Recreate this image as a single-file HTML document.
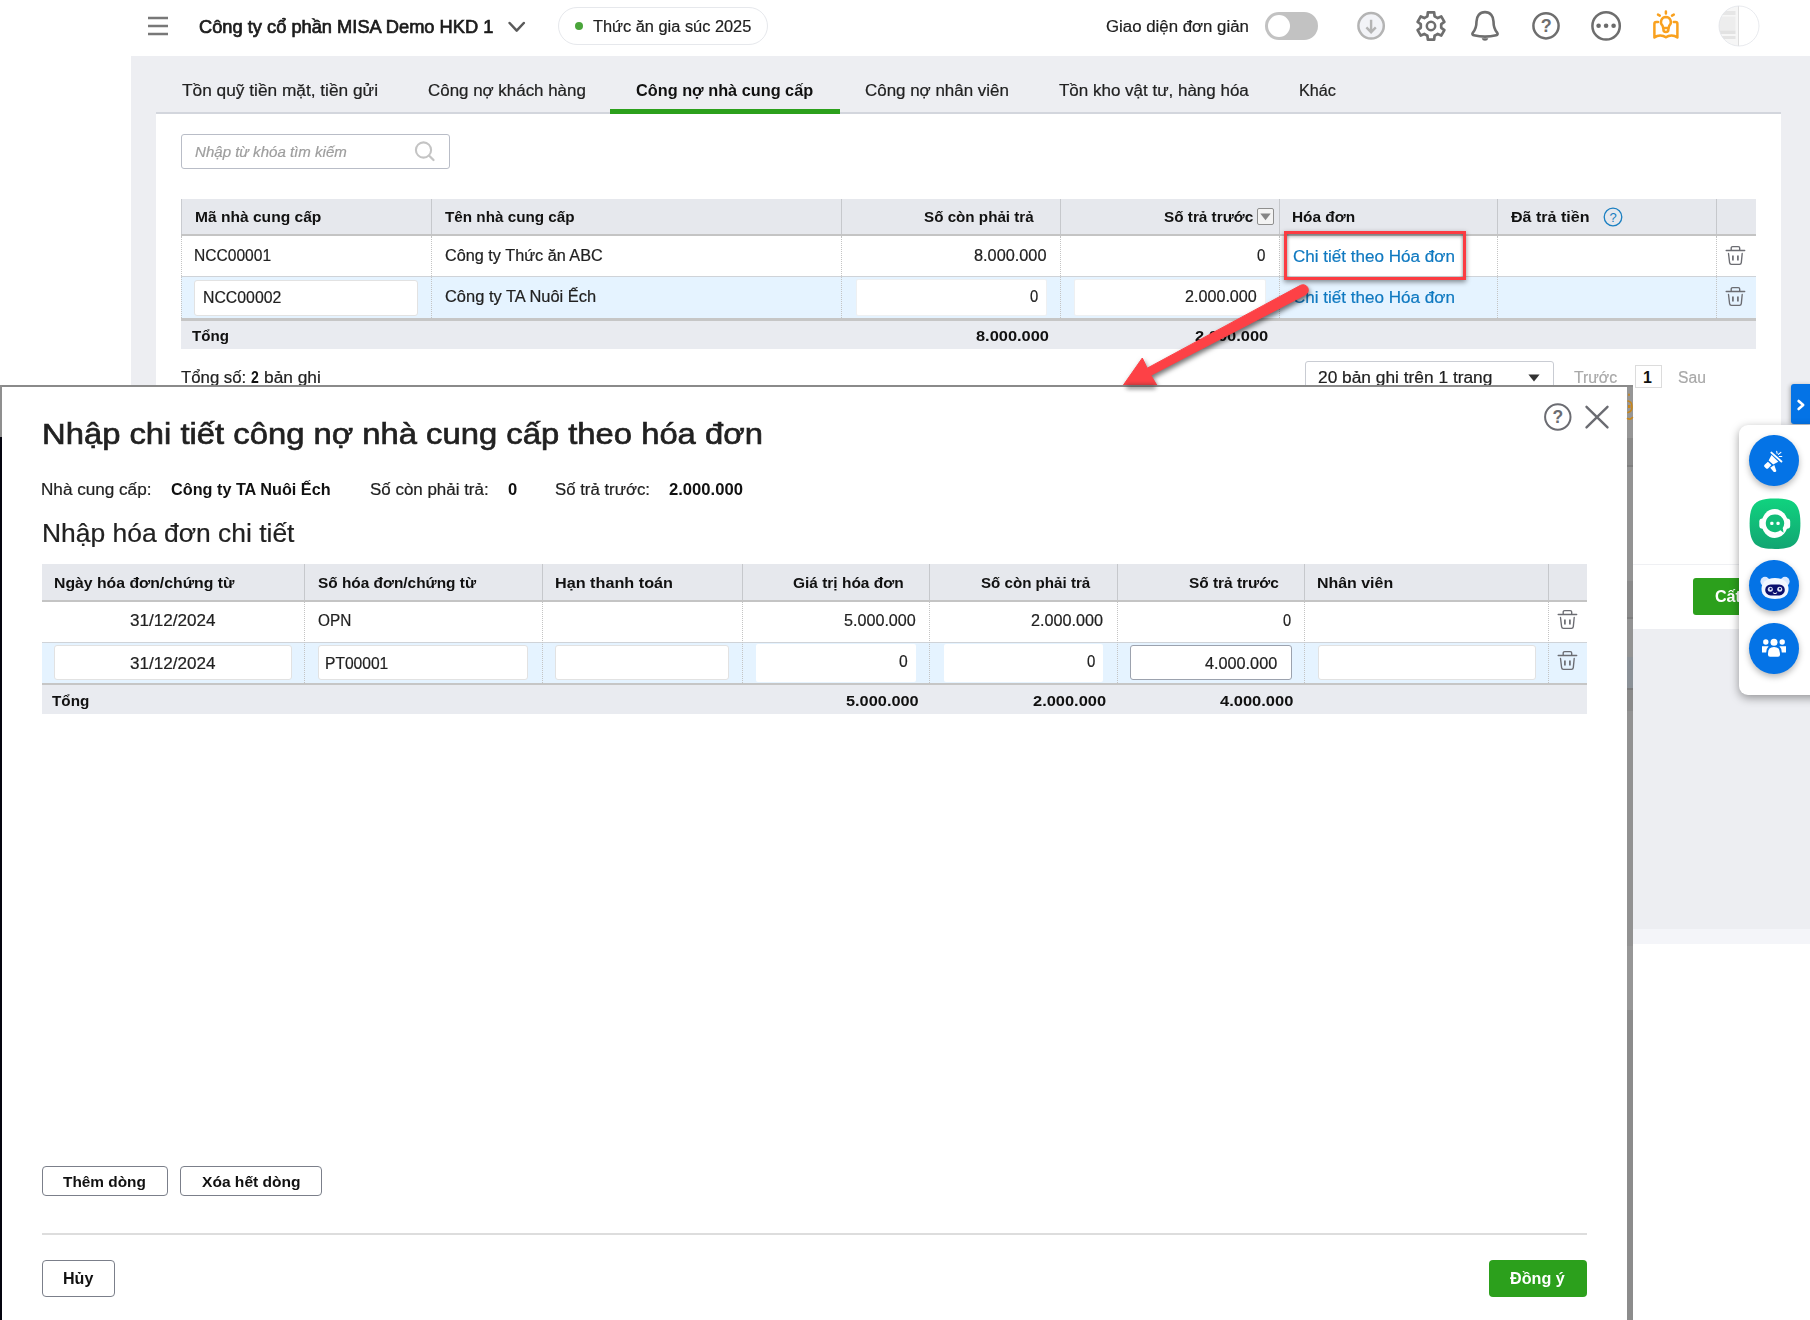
<!DOCTYPE html>
<html lang="vi">
<head>
<meta charset="utf-8">
<title>Nhập chi tiết công nợ nhà cung cấp theo hóa đơn</title>
<style>
html,body{margin:0;padding:0}
body{width:1810px;height:1320px;position:relative;overflow:hidden;background:#fff;font-family:"Liberation Sans",sans-serif;color:#212121}
.t{position:absolute;white-space:pre;line-height:1;margin:0;transform-origin:0 0}
.a{position:absolute;box-sizing:border-box}
.vs{position:absolute;width:1px;background:#c6c8cc}
.vd{position:absolute;width:0;border-left:1px dotted #c4c4c4}
.inp{position:absolute;box-sizing:border-box;background:#fff;border:1px solid #e2e2e2;border-radius:3px}
.num{position:absolute;box-sizing:border-box;background:#fff;border-radius:2px}
svg{position:absolute;overflow:visible}
#page,#modal,#float{position:absolute;left:0;top:0;width:1810px;height:1320px}
</style>
</head>
<body>
<div id="page">
<!-- backgrounds -->
<div class="a" style="left:131px;top:56px;width:1679px;height:873px;background:#edeef2"></div>
<div class="a" style="left:131px;top:929px;width:1679px;height:15px;background:#f4f5f9"></div>
<div class="a" style="left:156px;top:112px;width:1625px;height:2px;background:#d3d6dd"></div>
<div class="a" style="left:156px;top:114px;width:1625px;height:515px;background:#fff"></div>
<div class="a" style="left:610px;top:109px;width:230px;height:5px;background:#2ca01c"></div>
<div class="a" style="left:156px;top:564px;width:1625px;height:1px;background:#eff0f3"></div>
<svg style="left:147px;top:16px" width="22" height="20" viewBox="0 0 22 20"><path d="M1 2 H21 M1 10 H21 M1 18 H21" stroke="#787878" stroke-width="2.6"/></svg>
<svg style="left:508px;top:21px" width="18" height="12" viewBox="0 0 18 12"><path d="M1.6 2 L8.7 9.6 L15.8 2" fill="none" stroke="#5a5a5a" stroke-width="2.5" stroke-linecap="round" stroke-linejoin="round"/></svg>
<div class="a" style="left:558px;top:7px;width:210px;height:38px;border:1px solid #e6e8ec;border-radius:19px;background:#fff"></div>
<div class="a" style="left:575px;top:22px;width:8px;height:8px;border-radius:50%;background:#4aa53a"></div>
<div class="a" style="left:1265px;top:12px;width:53px;height:28px;border-radius:14px;background:#c2c2c2"></div>
<div class="a" style="left:1267.8px;top:14.8px;width:22.4px;height:22.4px;border-radius:50%;background:#fff"></div>
<svg style="left:1356px;top:11px" width="30" height="30" viewBox="0 0 30 30"><circle cx="15.1" cy="14.8" r="12.7" fill="#f2f3f7" stroke="#b4b4b4" stroke-width="2.5"/><path d="M15.1 8.8 V21 M10.4 16.4 L15.1 21.2 L19.8 16.4" fill="none" stroke="#b4b4b4" stroke-width="2.4" stroke-linecap="butt" stroke-linejoin="miter"/></svg>
<svg style="left:1416px;top:10px" width="30" height="32" viewBox="0 0 30 32"><path d="M11.44 6.23 L11.85 2.36 L18.15 2.36 L18.56 6.23 L20.10 7.17 L21.68 8.03 L25.24 6.45 L28.39 11.91 L25.24 14.19 L25.20 16.00 L25.24 17.81 L28.39 20.09 L25.24 25.55 L21.68 23.97 L20.10 24.83 L18.56 25.77 L18.15 29.64 L11.85 29.64 L11.44 25.77 L9.90 24.83 L8.32 23.97 L4.76 25.55 L1.61 20.09 L4.76 17.81 L4.80 16.00 L4.76 14.19 L1.61 11.91 L4.76 6.45 L8.32 8.03 L9.90 7.17 Z" fill="none" stroke="#6e6e6e" stroke-width="2.7" stroke-linejoin="round"/><circle cx="15" cy="16" r="4.2" fill="none" stroke="#6e6e6e" stroke-width="2.5"/></svg>
<svg style="left:1470.8px;top:10px" width="28" height="32" viewBox="0 0 28 32"><path d="M14 2.1 C8.6 2.1 5.5 6.2 5.5 11.5 C5.5 16.5 5 19 1.9 22.6 C0.9 23.8 1.4 25 2.8 25.3 C9.4 26.9 18.6 26.9 25.2 25.3 C26.6 25 27.1 23.8 26.1 22.6 C23 19 22.5 16.5 22.5 11.5 C22.5 6.2 19.4 2.1 14 2.1 Z" fill="none" stroke="#6e6e6e" stroke-width="2.6" stroke-linejoin="round"/><path d="M10.6 28.3 H17.4 Q16.6 30.8 14 30.8 Q11.4 30.8 10.6 28.3 Z" fill="#6b6b6b"/></svg>
<svg style="left:1531px;top:11px" width="30" height="30" viewBox="0 0 30 30"><circle cx="15" cy="14.8" r="12.6" fill="none" stroke="#6e6e6e" stroke-width="2.5"/><text x="15.2" y="21.4" text-anchor="middle" font-family="Liberation Sans, sans-serif" font-size="18" font-weight="700" fill="#6e6e6e">?</text></svg>
<svg style="left:1590px;top:10px" width="32" height="32" viewBox="0 0 32 32"><circle cx="16.1" cy="15.9" r="13.7" fill="none" stroke="#6e6e6e" stroke-width="2.5"/><circle cx="8.6" cy="15.8" r="2.3" fill="#6b6b6b"/><circle cx="16.1" cy="15.8" r="2.3" fill="#6b6b6b"/><circle cx="23.6" cy="15.8" r="2.3" fill="#6b6b6b"/></svg>
<svg style="left:1652px;top:10px" width="28" height="30" viewBox="0 0 28 30" fill="none" stroke="#f9a11e" stroke-width="2.5" stroke-linecap="round" stroke-linejoin="round"><path d="M13.9 1.6 V3.6 M6 4.6 L7.8 5.6 M21.8 4.6 L20 5.6"/><path d="M13.9 7 A5 5 0 0 1 17.3 15.6 L16.6 18 H11.2 L10.5 15.6 A5 5 0 0 1 13.9 7 Z"/><path d="M11.4 18 V19.4 A2.5 2.5 0 0 0 16.4 19.4 V18"/><path d="M6 12 H4.2 Q2.4 12 2.4 13.8 V27.4 Q5 25.4 8.2 25.4 Q11.6 25.4 13.9 27.3 Q16.2 25.4 19.6 25.4 Q22.8 25.4 25.4 27.4 V13.8 Q25.4 12 23.6 12 H21.8"/></svg>
<svg style="left:1718px;top:5px" width="42" height="42" viewBox="0 0 42 42"><defs><clipPath id="av"><circle cx="21" cy="21" r="20"/></clipPath></defs><g clip-path="url(#av)"><rect x="0" y="0" width="42" height="42" fill="#fff"/><rect x="0" y="0" width="20.5" height="42" fill="#f6f6f6"/><rect x="0" y="6" width="17.5" height="4" fill="#e6e6e6"/><rect x="0" y="11.5" width="17.5" height="14" fill="#ededed"/><rect x="0" y="25.5" width="17.5" height="3.5" fill="#e2e2e2"/><rect x="0" y="31" width="17.5" height="3" fill="#e4e4e4"/><rect x="20" y="0" width="1" height="42" fill="#dedede"/></g><circle cx="21" cy="21" r="20" fill="none" stroke="#e2e5ea" stroke-width="0.8"/></svg>
<!-- search -->
<div class="a" style="left:181px;top:134px;width:269px;height:35px;border:1px solid #b9bdc7;border-radius:3px;background:#fff"></div>
<svg style="left:412px;top:139px" width="26" height="26" viewBox="0 0 26 26"><circle cx="11.5" cy="11" r="7.6" fill="none" stroke="#c4c4c4" stroke-width="2.1"/><path d="M17.2 16.8 L21.5 21" stroke="#c4c4c4" stroke-width="2.3" stroke-linecap="round"/></svg>
<div class="a" style="left:181px;top:199px;width:1575px;height:35px;background:#e6e8ed"></div>
<div class="a" style="left:181px;top:234px;width:1575px;height:2px;background:#c4c4c4"></div>
<div class="a" style="left:181px;top:276px;width:1575px;height:1px;background:#cfd3d8"></div>
<div class="a" style="left:181px;top:277px;width:1575px;height:41px;background:#e5f3ff"></div>
<div class="a" style="left:181px;top:318px;width:1575px;height:3px;background:#c6c6c6"></div>
<div class="a" style="left:181px;top:321px;width:1575px;height:28px;background:#e9ebf0"></div>
<div class="vs" style="left:431px;top:199px;height:35px"></div>
<div class="vd" style="left:431px;top:236px;height:82px"></div>
<div class="vs" style="left:841px;top:199px;height:35px"></div>
<div class="vd" style="left:841px;top:236px;height:82px"></div>
<div class="vs" style="left:1060px;top:199px;height:35px"></div>
<div class="vd" style="left:1060px;top:236px;height:82px"></div>
<div class="vs" style="left:1279px;top:199px;height:35px"></div>
<div class="vd" style="left:1279px;top:236px;height:82px"></div>
<div class="vs" style="left:1497px;top:199px;height:35px"></div>
<div class="vd" style="left:1497px;top:236px;height:82px"></div>
<div class="vs" style="left:1716px;top:199px;height:35px"></div>
<div class="vd" style="left:1716px;top:236px;height:82px"></div>
<div class="vd" style="left:181px;top:236px;height:82px"></div>
<div class="vs" id="hleft" style="left:181px;top:199px;height:35px;background:#c9cbd0"></div>
<div class="inp" style="left:194px;top:280px;width:224px;height:35.5px"></div>
<div class="num" style="left:855.5px;top:279px;width:191px;height:37px;border:1px solid #eef0f2"></div>
<div class="num" style="left:1073.5px;top:279px;width:192px;height:37px;border:1px solid #eef0f2"></div>
<div class="a" style="left:1256.5px;top:207.5px;width:17.5px;height:17.5px;border:1.2px solid #8f8f8f;border-radius:2px;background:#f3f3f3"></div>
<svg style="left:1260px;top:212.5px" width="11" height="8" viewBox="0 0 11 8"><path d="M0.3 0.5 H10.7 L5.5 7.3 Z" fill="#858585"/></svg>
<svg style="left:1602.7px;top:207px" width="20" height="20" viewBox="0 0 20 20"><circle cx="10" cy="10" r="8.8" fill="none" stroke="#1a7fc1" stroke-width="1.3"/><text x="10" y="14.6" text-anchor="middle" font-family="Liberation Sans, sans-serif" font-size="13" fill="#1a7fc1">?</text></svg>
<svg style="left:1726px;top:245.5px" width="19" height="19" viewBox="0 0 19 19" fill="none" stroke="#6b6c72" stroke-width="1.35" stroke-linecap="round" stroke-linejoin="round"><path d="M0.2 4.5 H18.7"/><path d="M5.2 4.3 V2.1 Q5.2 0.6 6.7 0.6 H12.2 Q13.7 0.6 13.7 2.1 V4.3"/><path d="M2.5 7.5 L3.6 16.6 Q3.8 18.3 5.4 18.3 H13.5 Q15.1 18.3 15.3 16.6 L16.2 7.5"/><path d="M6.9 9.5 V14.5 M11.9 9.5 V14.5" stroke-width="1.7" stroke-linecap="butt"/></svg>
<svg style="left:1726px;top:286.5px" width="19" height="19" viewBox="0 0 19 19" fill="none" stroke="#6b6c72" stroke-width="1.35" stroke-linecap="round" stroke-linejoin="round"><path d="M0.2 4.5 H18.7"/><path d="M5.2 4.3 V2.1 Q5.2 0.6 6.7 0.6 H12.2 Q13.7 0.6 13.7 2.1 V4.3"/><path d="M2.5 7.5 L3.6 16.6 Q3.8 18.3 5.4 18.3 H13.5 Q15.1 18.3 15.3 16.6 L16.2 7.5"/><path d="M6.9 9.5 V14.5 M11.9 9.5 V14.5" stroke-width="1.7" stroke-linecap="butt"/></svg>
<div class="a" style="left:1284px;top:231px;width:182px;height:49px;border:3px solid #fb3c42;box-shadow:0 2px 5px rgba(0,0,0,.45), inset 0 3px 4px -1px rgba(0,0,0,.38), inset 2px 0 3px -1px rgba(0,0,0,.18), inset -2px 0 3px -1px rgba(0,0,0,.18)"></div>
<div class="a" style="left:1304.5px;top:360.6px;width:249px;height:36px;border:1px solid #c9ccd3;border-radius:3px;background:#fff"></div>
<svg style="left:1528px;top:373.5px" width="12" height="8" viewBox="0 0 12 8"><path d="M0.4 0.6 H11.6 L6 7.6 Z" fill="#333"/></svg>
<div class="a" style="left:1634.6px;top:365.3px;width:27.2px;height:23.2px;border:1px solid #dcdcdc;background:#fff"></div>
<div class="a" style="left:1693px;top:578px;width:110px;height:37px;background:#2ca01c;border-radius:3px"></div>
<span class="t" style="left:199.3px;top:18px;font-size:18px;color:#1b1b1b;transform:scaleX(1.0147);-webkit-text-stroke:0.7px #1b1b1b;">Công ty cổ phần MISA Demo HKD 1</span>
<span class="t" style="left:593.3px;top:19px;font-size:16px;color:#212121;transform:scaleX(1.0226);-webkit-text-stroke:0.2px #212121;">Thức ăn gia súc 2025</span>
<span class="t" style="left:1105.8px;top:19px;font-size:16px;color:#212121;transform:scaleX(1.0509);-webkit-text-stroke:0.2px #212121;">Giao diện đơn giản</span>
<span class="t" style="left:181.8px;top:83px;font-size:16px;color:#212121;transform:scaleX(1.0801);-webkit-text-stroke:0.2px #212121;">Tồn quỹ tiền mặt, tiền gửi</span>
<span class="t" style="left:427.8px;top:83px;font-size:16px;color:#212121;transform:scaleX(1.0575);-webkit-text-stroke:0.2px #212121;">Công nợ khách hàng</span>
<span class="t" style="left:636.3px;top:83px;font-size:16px;color:#111;transform:scaleX(1.0180);font-weight:700;">Công nợ nhà cung cấp</span>
<span class="t" style="left:865.3px;top:83px;font-size:16px;color:#212121;transform:scaleX(1.0583);-webkit-text-stroke:0.2px #212121;">Công nợ nhân viên</span>
<span class="t" style="left:1058.8px;top:83px;font-size:16px;color:#212121;transform:scaleX(1.0613);-webkit-text-stroke:0.2px #212121;">Tồn kho vật tư, hàng hóa</span>
<span class="t" style="left:1299.3px;top:83px;font-size:16px;color:#212121;transform:scaleX(1.0122);-webkit-text-stroke:0.2px #212121;">Khác</span>
<span class="t" style="left:195.0px;top:145px;font-size:14px;color:#9e9e9e;transform:scaleX(1.0757);-webkit-text-stroke:0.2px #9e9e9e;font-style:italic;">Nhập từ khóa tìm kiếm</span>
<span class="t" style="left:194.6px;top:209px;font-size:15px;color:#111;transform:scaleX(1.0380);font-weight:700;">Mã nhà cung cấp</span>
<span class="t" style="left:444.8px;top:209px;font-size:15px;color:#111;transform:scaleX(1.0161);font-weight:700;">Tên nhà cung cấp</span>
<span class="t" style="left:923.8px;top:209px;font-size:15px;color:#111;transform:scaleX(1.0128);font-weight:700;">Số còn phải trả</span>
<span class="t" style="left:1163.9px;top:209px;font-size:15px;color:#111;transform:scaleX(1.0203);font-weight:700;">Số trả trước</span>
<span class="t" style="left:1291.8px;top:209px;font-size:15px;color:#111;transform:scaleX(1.0260);font-weight:700;">Hóa đơn</span>
<span class="t" style="left:1511.3px;top:209px;font-size:15px;color:#111;transform:scaleX(1.0712);font-weight:700;">Đã trả tiền</span>
<span class="t" style="left:194.3px;top:248px;font-size:16px;color:#212121;transform:scaleX(0.9737);-webkit-text-stroke:0.2px #212121;">NCC00001</span>
<span class="t" style="left:444.8px;top:248px;font-size:16px;color:#212121;transform:scaleX(1.0154);-webkit-text-stroke:0.2px #212121;">Công ty Thức ăn ABC</span>
<span class="t" style="left:973.9px;top:248px;font-size:16px;color:#212121;transform:scaleX(1.0185);-webkit-text-stroke:0.2px #212121;">8.000.000</span>
<span class="t" style="left:1257.0px;top:248px;font-size:16px;color:#212121;transform:scaleX(0.9444);-webkit-text-stroke:0.2px #212121;">0</span>
<span class="t" style="left:1292.8px;top:249px;font-size:16px;color:#0f79c0;transform:scaleX(1.0655);-webkit-text-stroke:0.2px #0f79c0;">Chi tiết theo Hóa đơn</span>
<span class="t" style="left:202.7px;top:290px;font-size:16px;color:#212121;transform:scaleX(0.9890);-webkit-text-stroke:0.2px #212121;">NCC00002</span>
<span class="t" style="left:444.8px;top:289px;font-size:16px;color:#212121;transform:scaleX(1.0277);-webkit-text-stroke:0.2px #212121;">Công ty TA Nuôi Ếch</span>
<span class="t" style="left:1029.5px;top:289px;font-size:16px;color:#212121;transform:scaleX(0.9222);-webkit-text-stroke:0.2px #212121;">0</span>
<span class="t" style="left:1184.8px;top:289px;font-size:16px;color:#212121;transform:scaleX(1.0087);-webkit-text-stroke:0.2px #212121;">2.000.000</span>
<span class="t" style="left:1292.8px;top:290px;font-size:16px;color:#0f79c0;transform:scaleX(1.0655);-webkit-text-stroke:0.2px #0f79c0;">Chi tiết theo Hóa đơn</span>
<span class="t" style="left:192.2px;top:328px;font-size:15px;color:#111;transform:scaleX(1.0086);font-weight:700;">Tổng</span>
<span class="t" style="left:976.1px;top:328px;font-size:15px;color:#111;transform:scaleX(1.0936);font-weight:700;">8.000.000</span>
<span class="t" style="left:1194.8px;top:328px;font-size:15px;color:#111;transform:scaleX(1.0981);font-weight:700;">2.000.000</span>
<span class="t" style="left:181.3px;top:370px;font-size:16px;color:#212121;transform:scaleX(1.0475);-webkit-text-stroke:0.2px #212121;">Tổng số:</span>
<span class="t" style="left:250.9px;top:370px;font-size:16px;color:#111;transform:scaleX(0.8778);font-weight:700;">2</span>
<span class="t" style="left:263.9px;top:370px;font-size:16px;color:#212121;transform:scaleX(1.0817);-webkit-text-stroke:0.2px #212121;">bản ghi</span>
<span class="t" style="left:1318.3px;top:370px;font-size:16px;color:#212121;transform:scaleX(1.0830);-webkit-text-stroke:0.2px #212121;">20 bản ghi trên 1 trang</span>
<span class="t" style="left:1574.3px;top:370px;font-size:16px;color:#a8a8a8;transform:scaleX(0.9860);-webkit-text-stroke:0.2px #a8a8a8;">Trước</span>
<span class="t" style="left:1643.0px;top:370px;font-size:16px;color:#111;transform:scaleX(1.0000);font-weight:700;">1</span>
<span class="t" style="left:1678.3px;top:370px;font-size:16px;color:#a8a8a8;transform:scaleX(0.9793);-webkit-text-stroke:0.2px #a8a8a8;">Sau</span>
<span class="t" style="left:1714.6px;top:589px;font-size:16px;color:#fff;transform:scaleX(1.0056);font-weight:700;">Cất</span>
</div>
<svg style="left:0;top:0;filter:drop-shadow(1px 3px 2.5px rgba(0,0,0,.55))" width="1810" height="420" viewBox="0 0 1810 420"><path d="M1305.5 294.7 L1150.9 375.3 L1156.7 385.0 L1123.0 385.6 L1142.3 358.0 L1147.2 368.2 L1300.5 285.3 A5.3 5.3 0 0 1 1305.5 294.7 Z" fill="#fd4146" stroke="#fd4146" stroke-width="1" stroke-linejoin="round"/></svg>
<div id="modal">
<div class="a" style="left:2px;top:387px;width:1625px;height:933px;background:#fff"></div>
<div class="a" style="left:0;top:385px;width:1633px;height:2.2px;background:#8a8a8a"></div>
<div class="a" style="left:0;top:385px;width:2px;height:52px;background:#8f8f8f"></div>
<div class="a" style="left:0;top:437px;width:2px;height:883px;background:#04040f"></div>
<div class="a" style="left:1627px;top:387px;width:6px;height:51px;background:#969696"></div>
<div class="a" style="left:1627px;top:438px;width:6px;height:27px;background:#8a8a8a"></div>
<div class="a" style="left:1627px;top:465px;width:6px;height:2px;background:#7f7f7f"></div>
<div class="a" style="left:1627px;top:467px;width:6px;height:114px;background:#939393"></div>
<div class="a" style="left:1627px;top:581px;width:6px;height:36px;background:#8a8a8a"></div>
<div class="a" style="left:1627px;top:617px;width:6px;height:2px;background:#7e7e7e"></div>
<div class="a" style="left:1627px;top:619px;width:6px;height:38px;background:#939393"></div>
<div class="a" style="left:1627px;top:657px;width:6px;height:31px;background:#8b9197"></div>
<div class="a" style="left:1627px;top:688px;width:6px;height:2px;background:#7c7c7c"></div>
<div class="a" style="left:1627px;top:690px;width:6px;height:21px;background:#8a8a8a"></div>
<div class="a" style="left:1627px;top:711px;width:6px;height:235px;background:#929292"></div>
<div class="a" style="left:1627px;top:946px;width:6px;height:64px;background:#979797"></div>
<div class="a" style="left:1627px;top:1010px;width:6px;height:310px;background:#8c8c8c"></div>
<svg style="left:1627px;top:392px" width="6" height="30" viewBox="0 0 6 30"><g fill="none" stroke="#c8861c" stroke-width="1.6" stroke-linecap="round"><path d="M2 2.200 V3.200"/><path d="M1 9 Q5 9.500 5 15 Q5 19.500 1 20.500"/><path d="M0.500 26.500 Q3.500 28 5.500 25.500"/></g><rect x="1" y="13" width="2.500" height="3" fill="#c8861c"/></svg>

<svg style="left:1543px;top:402px" width="30" height="30" viewBox="0 0 30 30"><circle cx="14.8" cy="15" r="12.7" fill="none" stroke="#6b6c72" stroke-width="2"/><text x="14.8" y="21.2" text-anchor="middle" font-family="Liberation Sans, sans-serif" font-size="17.5" font-weight="700" fill="#6b6c72">?</text></svg>
<svg style="left:1585px;top:405px" width="24" height="24" viewBox="0 0 24 24"><path d="M1.5 1.8 L22.5 22.4 M22.5 1.8 L1.5 22.4" stroke="#6b6c72" stroke-width="2.4" stroke-linecap="round"/></svg>
<div class="a" style="left:42px;top:564px;width:1545px;height:36px;background:#e6e8ed"></div>
<div class="a" style="left:42px;top:600px;width:1545px;height:2px;background:#c4c4c4"></div>
<div class="a" style="left:42px;top:642px;width:1545px;height:1px;background:#cfd3d8"></div>
<div class="a" style="left:42px;top:643px;width:1545px;height:40px;background:#e5f3ff"></div>
<div class="a" style="left:42px;top:683px;width:1545px;height:2.8px;background:#c6c6c6"></div>
<div class="a" style="left:42px;top:685px;width:1545px;height:28.8px;background:#e9ebf0"></div>
<div class="vs" style="left:304px;top:564px;height:36px"></div>
<div class="vd" style="left:304px;top:602px;height:81px"></div>
<div class="vs" style="left:542px;top:564px;height:36px"></div>
<div class="vd" style="left:542px;top:602px;height:81px"></div>
<div class="vs" style="left:742px;top:564px;height:36px"></div>
<div class="vd" style="left:742px;top:602px;height:81px"></div>
<div class="vs" style="left:929px;top:564px;height:36px"></div>
<div class="vd" style="left:929px;top:602px;height:81px"></div>
<div class="vs" style="left:1117px;top:564px;height:36px"></div>
<div class="vd" style="left:1117px;top:602px;height:81px"></div>
<div class="vs" style="left:1304px;top:564px;height:36px"></div>
<div class="vd" style="left:1304px;top:602px;height:81px"></div>
<div class="vs" style="left:1548px;top:564px;height:36px"></div>
<div class="vd" style="left:1548px;top:602px;height:81px"></div>
<div class="inp" style="left:54.3px;top:645.2px;width:237.6px;height:35.3px"></div>
<div class="inp" style="left:318.4px;top:645.2px;width:210px;height:35.3px"></div>
<div class="inp" style="left:555.3px;top:645.4px;width:173.5px;height:34.2px"></div>
<div class="num" style="left:755.5px;top:643.6px;width:160.7px;height:38.6px"></div>
<div class="num" style="left:943.8px;top:643.6px;width:159.6px;height:38.6px"></div>
<div class="inp" style="left:1130.1px;top:645.4px;width:161.8px;height:34.2px;border-color:#9ca2ae"></div>
<div class="inp" style="left:1318.4px;top:645.4px;width:217.2px;height:34.2px"></div>
<svg style="left:1558px;top:610px" width="19" height="19" viewBox="0 0 19 19" fill="none" stroke="#6b6c72" stroke-width="1.35" stroke-linecap="round" stroke-linejoin="round"><path d="M0.2 4.5 H18.7"/><path d="M5.2 4.3 V2.1 Q5.2 0.6 6.7 0.6 H12.2 Q13.7 0.6 13.7 2.1 V4.3"/><path d="M2.5 7.5 L3.6 16.6 Q3.8 18.3 5.4 18.3 H13.5 Q15.1 18.3 15.3 16.6 L16.2 7.5"/><path d="M6.9 9.5 V14.5 M11.9 9.5 V14.5" stroke-width="1.7" stroke-linecap="butt"/></svg>
<svg style="left:1558px;top:651.1px" width="19" height="19" viewBox="0 0 19 19" fill="none" stroke="#6b6c72" stroke-width="1.35" stroke-linecap="round" stroke-linejoin="round"><path d="M0.2 4.5 H18.7"/><path d="M5.2 4.3 V2.1 Q5.2 0.6 6.7 0.6 H12.2 Q13.7 0.6 13.7 2.1 V4.3"/><path d="M2.5 7.5 L3.6 16.6 Q3.8 18.3 5.4 18.3 H13.5 Q15.1 18.3 15.3 16.6 L16.2 7.5"/><path d="M6.9 9.5 V14.5 M11.9 9.5 V14.5" stroke-width="1.7" stroke-linecap="butt"/></svg>
<div class="a" style="left:42.2px;top:1166.2px;width:125.4px;height:29.5px;border:1px solid #7b7f8a;border-radius:4px;background:#fff"></div>
<div class="a" style="left:180.2px;top:1166.2px;width:141.5px;height:29.5px;border:1px solid #7b7f8a;border-radius:4px;background:#fff"></div>
<div class="a" style="left:42px;top:1233.4px;width:1545px;height:1.6px;background:#dddddd"></div>
<div class="a" style="left:42.2px;top:1260.3px;width:72.4px;height:36.3px;border:1px solid #7b7f8a;border-radius:4px;background:#fff"></div>
<div class="a" style="left:1489px;top:1259.8px;width:98px;height:37px;background:#2ca01c;border-radius:4px"></div>
<div class="a" id="ash" style="left:1126px;top:385.2px;width:30px;height:4px;background:#2c2c2c;border-radius:3px;filter:blur(2px);opacity:.55"></div>
<span class="t" style="left:41.8px;top:419px;font-size:29.6px;color:#212121;transform:scaleX(1.1076);-webkit-text-stroke:0.65px #212121;">Nhập chi tiết công nợ nhà cung cấp theo hóa đơn</span>
<span class="t" style="left:41.2px;top:482px;font-size:16px;color:#212121;transform:scaleX(1.0701);-webkit-text-stroke:0.2px #212121;">Nhà cung cấp:</span>
<span class="t" style="left:171.3px;top:482px;font-size:16px;color:#111;transform:scaleX(1.0144);font-weight:700;">Công ty TA Nuôi Ếch</span>
<span class="t" style="left:370.0px;top:482px;font-size:16px;color:#212121;transform:scaleX(1.0585);-webkit-text-stroke:0.2px #212121;">Số còn phải trả:</span>
<span class="t" style="left:507.7px;top:482px;font-size:16px;color:#111;transform:scaleX(1.0333);font-weight:700;">0</span>
<span class="t" style="left:555.0px;top:482px;font-size:16px;color:#212121;transform:scaleX(1.0493);-webkit-text-stroke:0.2px #212121;">Số trả trước:</span>
<span class="t" style="left:669.3px;top:482px;font-size:16px;color:#111;transform:scaleX(1.0381);font-weight:700;">2.000.000</span>
<span class="t" style="left:41.8px;top:521px;font-size:25px;color:#212121;transform:scaleX(1.0573);-webkit-text-stroke:0.2px #212121;">Nhập hóa đơn chi tiết</span>
<span class="t" style="left:53.5px;top:575px;font-size:15px;color:#111;transform:scaleX(1.0516);font-weight:700;">Ngày hóa đơn/chứng từ</span>
<span class="t" style="left:318.0px;top:575px;font-size:15px;color:#111;transform:scaleX(1.0261);font-weight:700;">Số hóa đơn/chứng từ</span>
<span class="t" style="left:554.5px;top:575px;font-size:15px;color:#111;transform:scaleX(1.0806);font-weight:700;">Hạn thanh toán</span>
<span class="t" style="left:792.7px;top:575px;font-size:15px;color:#111;transform:scaleX(1.0301);font-weight:700;">Giá trị hóa đơn</span>
<span class="t" style="left:981.0px;top:575px;font-size:15px;color:#111;transform:scaleX(1.0082);font-weight:700;">Số còn phải trả</span>
<span class="t" style="left:1189.3px;top:575px;font-size:15px;color:#111;transform:scaleX(1.0272);font-weight:700;">Số trả trước</span>
<span class="t" style="left:1317.2px;top:575px;font-size:15px;color:#111;transform:scaleX(1.0621);font-weight:700;">Nhân viên</span>
<span class="t" style="left:129.7px;top:613px;font-size:16px;color:#212121;transform:scaleX(1.0676);-webkit-text-stroke:0.2px #212121;">31/12/2024</span>
<span class="t" style="left:318.0px;top:613px;font-size:16px;color:#212121;transform:scaleX(0.9585);-webkit-text-stroke:0.2px #212121;">OPN</span>
<span class="t" style="left:844.0px;top:613px;font-size:16px;color:#212121;transform:scaleX(1.0087);-webkit-text-stroke:0.2px #212121;">5.000.000</span>
<span class="t" style="left:1031.0px;top:613px;font-size:16px;color:#212121;transform:scaleX(1.0115);-webkit-text-stroke:0.2px #212121;">2.000.000</span>
<span class="t" style="left:1282.6px;top:613px;font-size:16px;color:#212121;transform:scaleX(0.9111);-webkit-text-stroke:0.2px #212121;">0</span>
<span class="t" style="left:129.7px;top:656px;font-size:16px;color:#212121;transform:scaleX(1.0676);-webkit-text-stroke:0.2px #212121;">31/12/2024</span>
<span class="t" style="left:325.3px;top:656px;font-size:16px;color:#212121;transform:scaleX(0.9744);-webkit-text-stroke:0.2px #212121;">PT00001</span>
<span class="t" style="left:899.0px;top:654px;font-size:16px;color:#212121;transform:scaleX(0.9778);-webkit-text-stroke:0.2px #212121;">0</span>
<span class="t" style="left:1086.8px;top:654px;font-size:16px;color:#212121;transform:scaleX(0.9333);-webkit-text-stroke:0.2px #212121;">0</span>
<span class="t" style="left:1204.9px;top:656px;font-size:16px;color:#212121;transform:scaleX(1.0143);-webkit-text-stroke:0.2px #212121;">4.000.000</span>
<span class="t" style="left:52.3px;top:693px;font-size:15px;color:#111;transform:scaleX(1.0168);font-weight:700;">Tổng</span>
<span class="t" style="left:845.8px;top:693px;font-size:15px;color:#111;transform:scaleX(1.0890);font-weight:700;">5.000.000</span>
<span class="t" style="left:1033.2px;top:693px;font-size:15px;color:#111;transform:scaleX(1.0951);font-weight:700;">2.000.000</span>
<span class="t" style="left:1220.3px;top:693px;font-size:15px;color:#111;transform:scaleX(1.0996);font-weight:700;">4.000.000</span>
<span class="t" style="left:63.1px;top:1174px;font-size:15px;color:#111;transform:scaleX(1.0253);font-weight:700;">Thêm dòng</span>
<span class="t" style="left:201.5px;top:1174px;font-size:15px;color:#111;transform:scaleX(1.0376);font-weight:700;">Xóa hết dòng</span>
<span class="t" style="left:63.2px;top:1271px;font-size:16px;color:#111;transform:scaleX(1.0025);font-weight:700;">Hủy</span>
<span class="t" style="left:1510.3px;top:1271px;font-size:16px;color:#fff;transform:scaleX(1.0088);font-weight:700;">Đồng ý</span>
</div>
<div id="float">
<div class="a" style="left:1791px;top:384px;width:22px;height:40px;background:#0473e6;border-radius:3px;box-shadow:-1px 1px 4px rgba(0,0,0,.3)"></div>
<svg style="left:1796px;top:399px" width="10" height="12" viewBox="0 0 10 12"><path d="M2.6 2 L7.2 6 L2.6 10" fill="none" stroke="#fff" stroke-width="2.6" stroke-linecap="round" stroke-linejoin="round"/></svg>
<div class="a" style="left:1739px;top:425px;width:90px;height:270px;background:#fff;border-radius:9px;box-shadow:0 3px 10px rgba(0,0,0,.38)"></div>
<div class="a" style="left:1748.8px;top:434.9px;width:50px;height:51.6px;border-radius:50%;background:#0473e6;box-shadow:0 3px 6px rgba(0,0,0,.28)"></div>
<div class="a" style="left:1748.8px;top:559.8px;width:50px;height:51.6px;border-radius:50%;background:#0473e6;box-shadow:0 3px 6px rgba(0,0,0,.28)"></div>
<div class="a" style="left:1748.8px;top:622.6px;width:50px;height:51.6px;border-radius:50%;background:#0473e6;box-shadow:0 3px 6px rgba(0,0,0,.28)"></div>
<svg style="left:1749px;top:498px" width="52" height="52" viewBox="0 0 52 52"><defs><linearGradient id="gg" x1="0" y1="0" x2="0" y2="1"><stop offset="0" stop-color="#10d37f"/><stop offset="1" stop-color="#12a572"/></linearGradient></defs><path d="M26 0.4 C44 0.4 51.4 4 51.4 25.6 C51.4 47.4 44 51 26 51 C8 51 0.6 47.4 0.6 25.6 C0.6 4 8 0.4 26 0.4 Z" fill="url(#gg)"/><ellipse cx="25.750" cy="25.500" rx="13.100" ry="14.400" fill="#fff"/><rect x="10.300" y="20.400" width="30.900" height="10.400" rx="3.200" fill="#fff"/><path d="M25.750 16.400 A8.900 8.900 0 1 0 31.300 32.200 L34.600 34.700 L33.700 30.100 A8.900 8.900 0 0 0 25.750 16.400 Z" fill="#12bd78"/><rect x="21.200" y="23.800" width="3.300" height="3.200" rx="1.300" fill="#fff"/><rect x="27.400" y="23.800" width="3.300" height="3.200" rx="1.300" fill="#fff"/></svg>
<svg style="left:1755px;top:442px" width="40" height="40" viewBox="0 0 40 40"><g fill="#fff"><path d="M16.500 13 L23.300 19.700 L18.200 22.600 L13.600 18.500 Z"/><path d="M12.900 19.700 L16.400 22.900 L13.300 26.200 Q12.100 27.400 10.900 26.300 L9.600 25.100 Q8.400 23.900 9.600 22.800 Z"/><path d="M15.200 25.800 L19.300 23.100 L21.200 28.400 Q21.600 29.800 20.200 30 L18.800 30 Z"/></g><g stroke="#fff" fill="none" stroke-linecap="round"><path d="M16.400 10.600 L26.400 19.500" stroke-width="1.900"/><path d="M21.700 9.400 L22.100 11.500 M23.400 12.400 L25.900 10.300 M24.300 14.500 L26.800 14.500" stroke-width="1.100"/></g></svg>
<svg style="left:1759.4px;top:574.8px" width="32" height="26" viewBox="0 0 32 26"><circle cx="6" cy="6.400" r="4.600" fill="#d9e8ff"/><circle cx="26" cy="6.400" r="4.600" fill="#d9e8ff"/><path d="M16 3 C25.500 3 29.500 8 29.500 14 C29.500 20.500 24.500 24 16 24 C7.500 24 2.500 20.500 2.500 14 C2.500 8 6.500 3 16 3 Z" fill="#f2f7ff"/><rect x="6.200" y="9.400" width="19.600" height="11" rx="5.500" fill="#0a0f6e"/><circle cx="11.300" cy="14.200" r="2.500" fill="#dfe6f5"/><circle cx="20.700" cy="14.200" r="2.500" fill="#dfe6f5"/><circle cx="11.600" cy="13.800" r="1.100" fill="#0a0f6e"/><circle cx="21" cy="13.800" r="1.100" fill="#0a0f6e"/><path d="M14.200 18 Q16 19.600 17.800 18" stroke="#fff" stroke-width="1" fill="none" stroke-linecap="round"/></svg>
<svg style="left:1761px;top:638px" width="26" height="20" viewBox="0 0 26 20" fill="#fff"><circle cx="13" cy="4.300" r="3.500"/><circle cx="4.800" cy="4" r="2.700"/><circle cx="21.200" cy="4" r="2.700"/><path d="M7 15.400 Q7 9 13 9 Q19 9 19 15.400 V16.800 Q19 18.800 17 18.800 H9 Q7 18.800 7 16.800 Z"/><path d="M1 8.200 H7.600 Q5.200 10.400 5.200 14.600 H1 Z"/><path d="M25 8.200 H18.400 Q20.800 10.400 20.800 14.600 H25 Z"/></svg>
</div>
</body>
</html>
